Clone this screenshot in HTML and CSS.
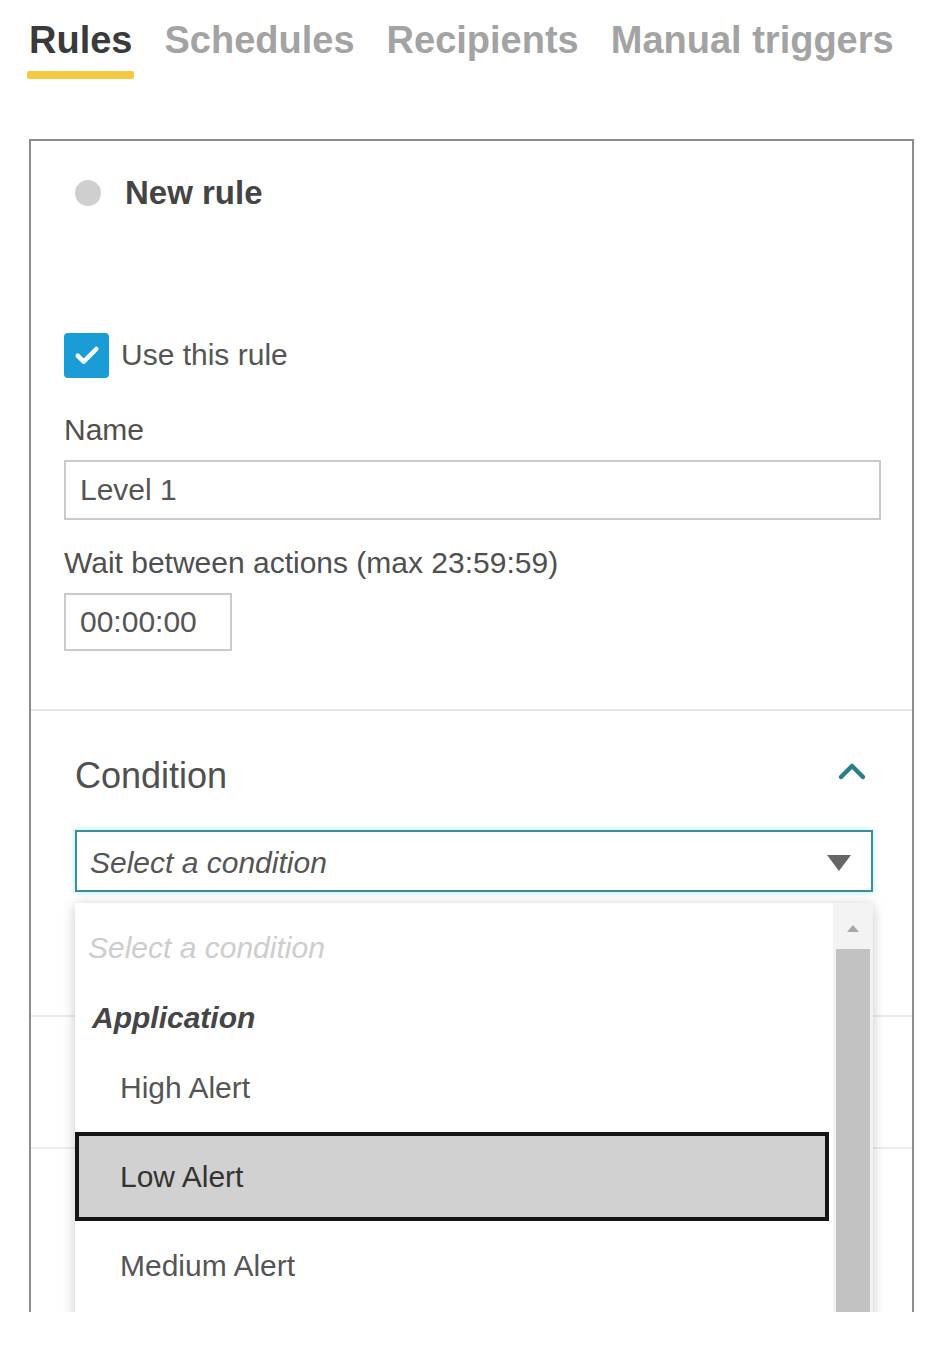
FILE: index.html
```html
<!DOCTYPE html>
<html>
  <head>
    <title>Rules</title>
    <meta charset="UTF-8" />
    <link rel="stylesheet" href="styles.css">
  </head>
  <body>
    <div class="page">
      <nav class="tabs">
        <span class="tab active">Rules</span>
        <span class="tab">Schedules</span>
        <span class="tab">Recipients</span>
        <span class="tab">Manual triggers</span>
      </nav>

      <div class="panel">
        <div class="rule-head">
          <span class="dot"></span>
          <span class="rule-title">New rule</span>
        </div>

        <div class="rule-body">
          <label class="check-row">
            <span class="checkbox">
              <svg viewBox="0 0 24 24" width="32" height="32"><path d="M5 12.5l4.5 4.5L19 7.5" fill="none" stroke="#fff" stroke-width="3.4" stroke-linecap="round" stroke-linejoin="round"/></svg>
            </span>
            Use this rule
          </label>

          <div class="field-label">Name</div>
          <div class="text-input wide">Level 1</div>

          <div class="field-label">Wait between actions (max 23:59:59)</div>
          <div class="text-input short">00:00:00</div>
        </div>

        <div class="condition">
          <div class="condition-head">
            <span class="condition-title">Condition</span>
            <svg class="chevron" viewBox="0 0 30 22" width="30" height="22"><path d="M4 18L15 7l11 11" fill="none" stroke="#2b7d8c" stroke-width="4.5" stroke-linecap="round" stroke-linejoin="round"/></svg>
          </div>

          <div class="select-wrap">
            <div class="select-box">
              <span>Select a condition</span>
              <span class="caret"></span>
            </div>

            <div class="dropdown">
              <div class="options">
                <div class="opt placeholder">Select a condition</div>
                <div class="opt group">Application</div>
                <div class="opt">High Alert</div>
                <div class="opt selected">Low Alert</div>
                <div class="opt">Medium Alert</div>
              </div>
              <div class="scrollbar">
                <span class="arrow-up"></span>
                <div class="thumb"></div>
              </div>
            </div>
          </div>
        </div>

        <div class="section"></div>
        <div class="section last"></div>
      </div>
    </div>
  </body>
</html>
```

FILE: styles.css
```css
body {
  margin: 0;
  background: #fff;
  font-family: "Liberation Sans", Arial, sans-serif;
  color: #555;
}
.page {
  height: 1312px;
  overflow: hidden;
}
.tabs {
  display: flex;
  gap: 32px;
  padding: 19px 0 0 29px;
  height: 119px;
  box-sizing: border-box;
}
.tab {
  font-size: 38px;
  font-weight: bold;
  color: #a3a3a3;
  display: inline-block;
  height: 60px;
}
.tab.active {
  color: #3a3a3a;
}
.tab.active::after {
  content: "";
  display: block;
  height: 8px;
  margin-top: 9px;
  margin-left: -2px;
  margin-right: -2px;
  background: #f6c945;
  border-radius: 2px;
}
.panel {
  margin-left: 29px;
  width: 885px;
  border: 2px solid #8c8c8c;
  border-bottom: none;
  box-sizing: border-box;
  min-height: 1200px;
  margin-top: 20px;
}
.rule-head {
  display: flex;
  align-items: center;
  gap: 24px;
  padding: 33px 0 0 44px;
  height: 38px;
}
.dot {
  width: 26px;
  height: 26px;
  border-radius: 50%;
  background: #cfcfcf;
}
.rule-title {
  font-size: 33px;
  font-weight: bold;
  color: #444;
}
.rule-body {
  padding: 120px 0 58px 33px;
  border-bottom: 2px solid #e6e6e6;
}
.check-row {
  display: flex;
  align-items: center;
  gap: 12px;
  font-size: 30px;
  color: #555;
  height: 46px;
  margin-bottom: 34px;
}
.checkbox {
  width: 45px;
  height: 45px;
  background: #1a9cd6;
  border-radius: 4px;
  display: flex;
  align-items: center;
  justify-content: center;
}
.field-label {
  font-size: 30px;
  line-height: 36px;
  color: #4f4f4f;
  margin-bottom: 12px;
}
.text-input {
  border: 2px solid #cacaca;
  box-sizing: border-box;
  font-size: 30px;
  color: #555;
  display: flex;
  align-items: center;
  padding-left: 14px;
}
.text-input.wide {
  width: 817px;
  height: 60px;
  margin-bottom: 25px;
}
.text-input.short {
  width: 168px;
  height: 58px;
}
.condition {
  padding: 44px 39px 0 44px;
  height: 306px;
  box-sizing: border-box;
  border-bottom: 2px solid #ececec;
}
.condition-head {
  display: flex;
  justify-content: space-between;
  align-items: center;
  height: 42px;
  margin-bottom: 33px;
}
.condition-title {
  font-size: 36px;
  color: #505050;
}
.chevron {
  margin-right: 6px;
  margin-top: -12px;
}
.select-wrap {
  position: relative;
}
.select-box {
  height: 62px;
  border: 2px solid #3a8d99;
  box-shadow: 0 0 6px #a6ecf2;
  box-sizing: border-box;
  display: flex;
  align-items: center;
  justify-content: space-between;
  padding: 4px 20px 0 13px;
  font-size: 30px;
  font-style: italic;
  color: #555;
}
.caret {
  width: 0;
  height: 0;
  border-left: 12px solid transparent;
  border-right: 12px solid transparent;
  border-top: 16px solid #666;
}
.dropdown {
  position: absolute;
  top: 73px;
  left: 0;
  right: 0;
  height: 420px;
  background: #fff;
  box-shadow: 0 2px 12px rgba(0, 0, 0, 0.22);
  display: flex;
}
.options {
  flex: 1;
}
.opt {
  height: 89px;
  box-sizing: border-box;
  display: flex;
  align-items: center;
  padding-left: 45px;
  font-size: 30px;
  color: #555;
}
.opt.placeholder {
  height: 90px;
  padding-left: 13px;
  font-style: italic;
  color: #cdcdcd;
}
.opt.group {
  height: 50px;
  padding-left: 17px;
  font-weight: bold;
  font-style: italic;
  color: #454545;
}
.opt.selected {
  background: #d1d1d1;
  border: 4px solid #151515;
  padding-left: 41px;
  color: #333;
}
.scrollbar {
  width: 40px;
  margin-left: 4px;
  background: #f3f3f3;
  display: flex;
  flex-direction: column;
  align-items: center;
}
.arrow-up {
  width: 0;
  height: 0;
  border-left: 6px solid transparent;
  border-right: 6px solid transparent;
  border-bottom: 7px solid #a8a8a8;
  margin: 22px 0 17px;
}
.thumb {
  width: 34px;
  flex: 1;
  background: #c2c2c2;
}
.section {
  height: 130px;
  border-bottom: 2px solid #ececec;
}
.section.last {
  height: 300px;
  border-bottom: none;
}
```
